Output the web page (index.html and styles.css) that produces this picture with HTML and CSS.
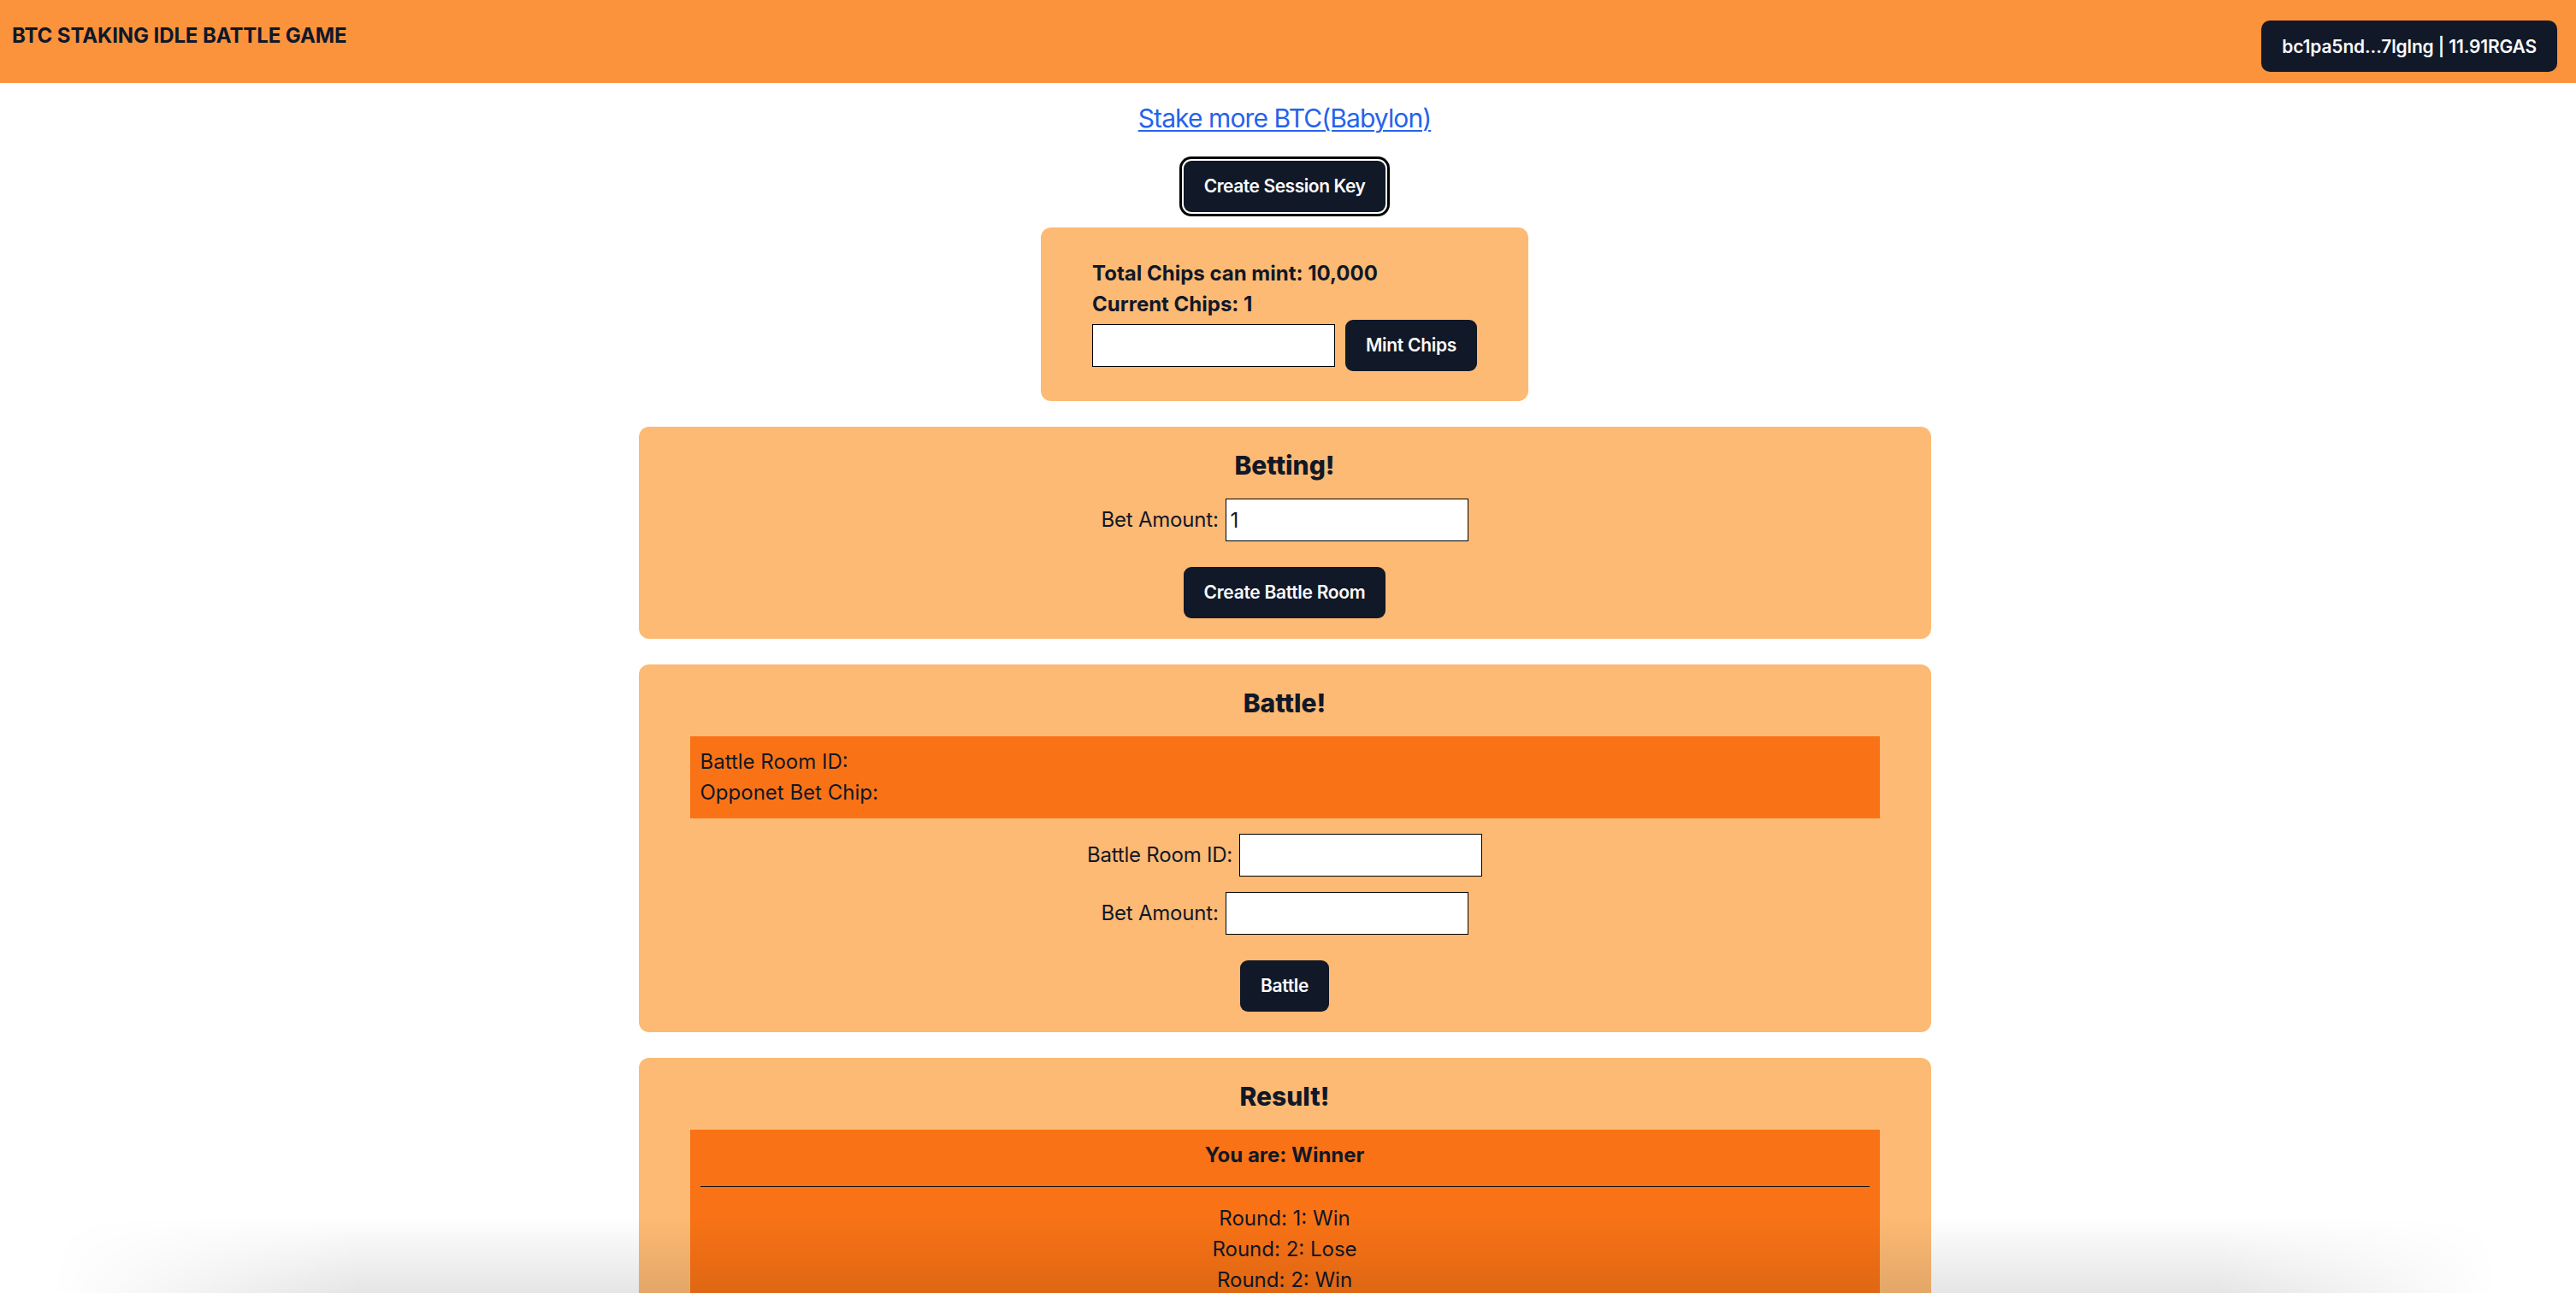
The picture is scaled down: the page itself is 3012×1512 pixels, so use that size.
FILE: index.html
```html
<!DOCTYPE html>
<html lang="en">
<head>
<meta charset="utf-8">
<title>BTC Staking Idle Battle Game</title>
<link rel="stylesheet" href="styles.css">
</head>
<body>
<header class="topbar">
  <h1 class="brand">BTC STAKING IDLE BATTLE GAME</h1>
  <button class="wallet">bc1pa5nd...7lglng | 11.91RGAS</button>
</header>
<main class="page">
  <a class="stake-link" href="#">Stake more BTC(Babylon)</a>
  <button class="btn btn-focus">Create Session Key</button>
  <section class="mint-card">
    <p class="mint-line">Total Chips can mint: 10,000</p>
    <p class="mint-line">Current Chips: 1</p>
    <div class="mint-row">
      <input class="field" type="text">
      <button class="btn">Mint Chips</button>
    </div>
  </section>

  <section class="card">
    <h2 class="card-title">Betting!</h2>
    <div class="form-row">
      <label class="form-label">Bet Amount:</label>
      <input class="field" type="text" value="1">
    </div>
    <button class="btn btn-spaced">Create Battle Room</button>
  </section>

  <section class="card">
    <h2 class="card-title">Battle!</h2>
    <div class="info-box">
      <p class="info-line">Battle Room ID:</p>
      <p class="info-line">Opponet Bet Chip:</p>
    </div>
    <div class="form-row">
      <label class="form-label">Battle Room ID:</label>
      <input class="field" type="text">
    </div>
    <div class="form-row">
      <label class="form-label">Bet Amount:</label>
      <input class="field" type="text">
    </div>
    <button class="btn btn-spaced">Battle</button>
  </section>

  <section class="card">
    <h2 class="card-title">Result!</h2>
    <div class="info-box result-box">
      <p class="result-head">You are: Winner</p>
      <div class="divider"></div>
      <p class="info-line">Round: 1: Win</p>
      <p class="info-line">Round: 2: Lose</p>
      <p class="info-line">Round: 2: Win</p>
    </div>
  </section>
</main>
<div class="bottom-shade"></div>
</body>
</html>
```
FILE: styles.css
```css
* { box-sizing: border-box; }

html, body {
  margin: 0;
  padding: 0;
  background: #ffffff;
}

body {
  font-family: Inter, "Noto Sans", "Liberation Sans", sans-serif;
  color: #111827;
  font-size: 24px;
  line-height: 36px;
}

p { margin: 0; }

.topbar {
  height: 97px;
  background: #fb923c;
  display: flex;
  justify-content: space-between;
  align-items: flex-start;
  padding: 24px 22px 0 14px;
}

.brand {
  margin: 0;
  font-size: 24px;
  line-height: 36px;
  font-weight: 700;
  color: #0f172a;
  letter-spacing: -0.1px;
}

.wallet {
  height: 60px;
  padding: 0 24px;
  border: none;
  border-radius: 10px;
  background: #111827;
  color: #f9fafb;
  font-family: inherit;
  font-size: 21px;
  font-weight: 600;
  letter-spacing: -0.15px;
}

.page {
  display: flex;
  flex-direction: column;
  align-items: center;
  padding: 20px 8px 0 0;
}

.stake-link {
  font-size: 30px;
  line-height: 42px;
  color: #2563eb;
  letter-spacing: -0.9px;
  text-decoration: underline;
  text-underline-offset: 3px;
  text-decoration-thickness: 2px;
}

.btn {
  height: 60px;
  padding: 0 24px;
  border: none;
  border-radius: 9px;
  background: #111827;
  color: #f9fafb;
  font-family: inherit;
  font-size: 21px;
  font-weight: 600;
  line-height: 30px;
  letter-spacing: -0.3px;
}

.btn-focus {
  margin-top: 29px;
  box-shadow: 0 0 0 2px #ffffff, 0 0 0 5px #000000;
  letter-spacing: -0.45px;
}

.mint-card {
  margin-top: 18px;
  padding: 36px 60px 35px;
  background: #fdba74;
  border-radius: 12px;
}

.mint-line {
  font-weight: 700;
}

.mint-row {
  display: flex;
  align-items: center;
  gap: 12px;
}

.field {
  width: 284px;
  height: 50px;
  border: 1px solid #000;
  background: #fff;
  padding: 0 5px;
  font-family: inherit;
  font-size: 24px;
  color: #111827;
  border-radius: 0;
  outline: none;
}

.card {
  width: 1511px;
  margin-top: 30px;
  padding: 24px 60px;
  background: #fdba74;
  border-radius: 12px;
  display: flex;
  flex-direction: column;
  align-items: center;
  gap: 18px;
}

.card-title {
  margin: 0;
  font-size: 30px;
  line-height: 42px;
  font-weight: 800;
}

.form-row {
  display: flex;
  align-items: center;
  gap: 8px;
}

.form-label {
  font-size: 24px;
  line-height: 36px;
  letter-spacing: -0.2px;
}

.btn-spaced { margin-top: 12px; }

.info-box {
  align-self: stretch;
  background: #f97316;
  padding: 12px;
}

.result-box {
  text-align: center;
}

.result-head {
  font-weight: 700;
}

.divider {
  height: 1px;
  background: #111;
  margin: 18px 0 19px;
}

.bottom-shade {
  position: fixed;
  left: 0;
  right: 0;
  bottom: 0;
  height: 90px;
  pointer-events: none;
  background: linear-gradient(to top, rgba(0, 0, 0, 0.1), rgba(0, 0, 0, 0));
  -webkit-mask-image: linear-gradient(to right, transparent 2%, #000 14%, #000 86%, transparent 97%);
  mask-image: linear-gradient(to right, transparent 2%, #000 14%, #000 86%, transparent 97%);
}
```
